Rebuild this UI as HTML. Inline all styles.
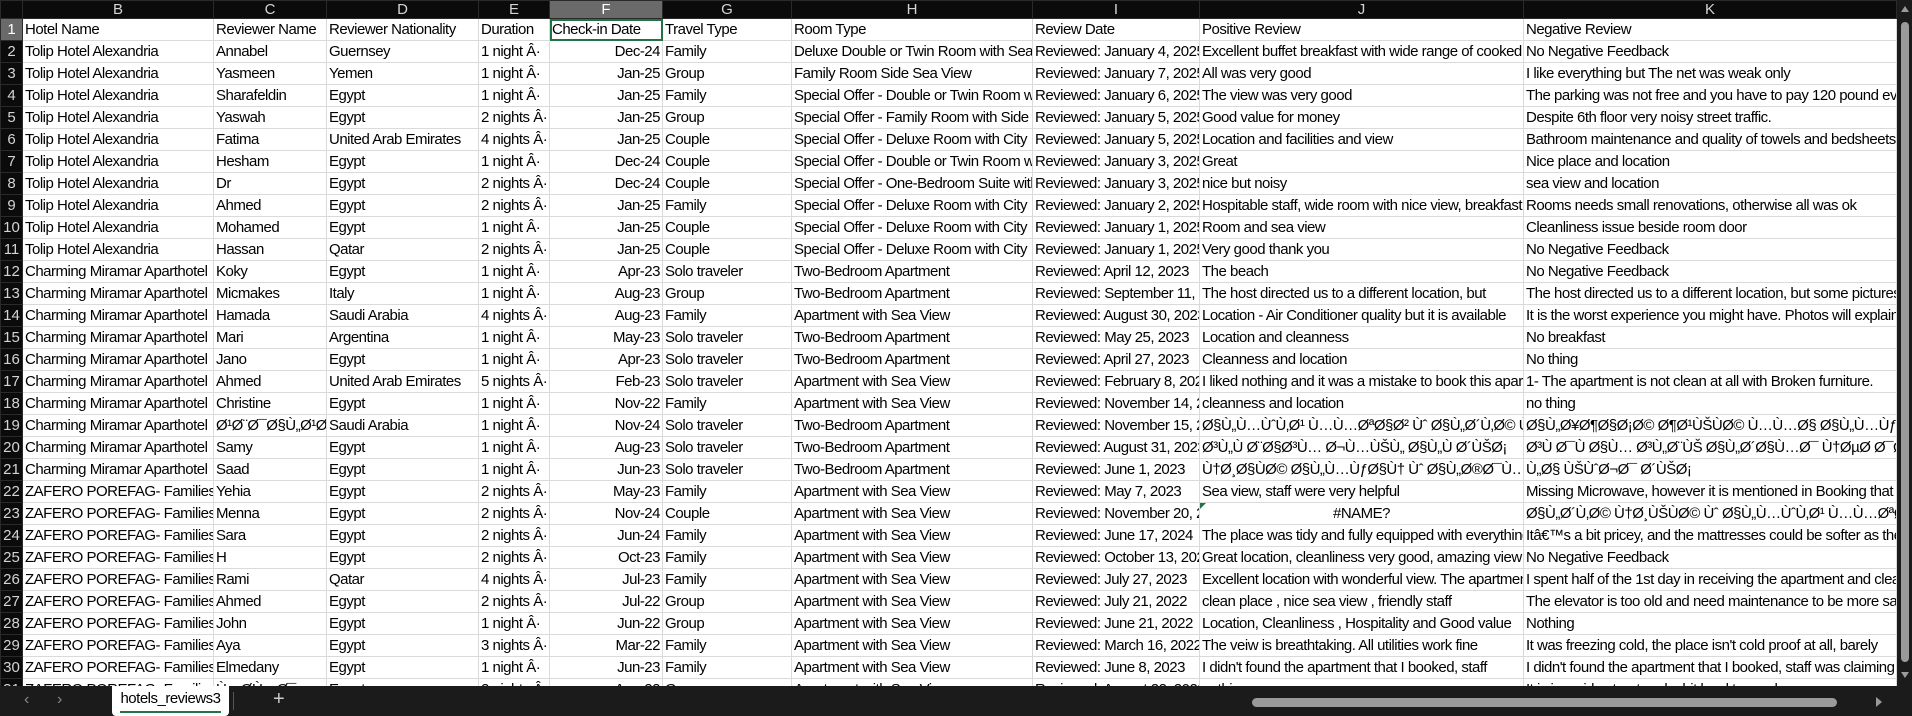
<!DOCTYPE html>
<html><head><meta charset="utf-8"><style>
body{margin:0;width:1912px;height:716px;overflow:hidden;background:#1b1b1b;font-family:"Liberation Sans Narrow","Liberation Sans",sans-serif;}
#wrap{position:absolute;left:0;top:0;width:1897px;height:686px;overflow:hidden;background:#fff}
table{border-collapse:collapse;table-layout:fixed;font-size:15px;color:#000;width:1896px;letter-spacing:-0.5px}
td{height:21px;padding:0 2px;border:1px solid #dadada;white-space:nowrap;overflow:hidden;line-height:21px;text-overflow:clip}
tr.h td{height:17px;line-height:17px;background:#0b0b0b;color:#d4d4d4;text-align:center;border-color:#2a2a2a;padding:0;letter-spacing:0}
td.r{background:#0b0b0b;color:#d4d4d4;text-align:center;border-color:#2a2a2a;padding:0;letter-spacing:0}
td.n{text-align:right}
.sel{background:#6a6a6a!important;color:#fff!important}
#vs{position:absolute;left:1897px;top:0;width:15px;height:686px;background:#1b1b1b}
#vs .t{position:absolute;left:4px;top:22px;width:8px;height:640px;background:#9a9a9a;border-radius:4px}
#bar{position:absolute;left:0;top:686px;width:1912px;height:30px;background:#1b1b1b;color:#bbb}
</style></head><body>
<div id="wrap"><table>
<colgroup><col style="width:22px"><col style="width:191px"><col style="width:113px"><col style="width:152px"><col style="width:71px"><col style="width:113px"><col style="width:129px"><col style="width:241px"><col style="width:167px"><col style="width:324px"><col style="width:373px"></colgroup>
<tr class="h"><td></td><td>B</td><td>C</td><td>D</td><td>E</td><td class="sel">F</td><td>G</td><td>H</td><td>I</td><td>J</td><td>K</td></tr>
<tr><td class="r sel">1</td><td>Hotel Name</td><td>Reviewer Name</td><td>Reviewer Nationality</td><td>Duration</td><td style="outline:2px solid #217346;outline-offset:-2px">Check-in Date</td><td>Travel Type</td><td>Room Type</td><td>Review Date</td><td>Positive Review</td><td>Negative Review</td></tr>
<tr><td class="r">2</td><td>Tolip Hotel Alexandria</td><td>Annabel</td><td>Guernsey</td><td>1 night Â·</td><td class="n">Dec-24</td><td>Family</td><td>Deluxe Double or Twin Room with Sea View</td><td>Reviewed: January 4, 2025</td><td>Excellent buffet breakfast with wide range of cooked</td><td>No Negative Feedback</td></tr>
<tr><td class="r">3</td><td>Tolip Hotel Alexandria</td><td>Yasmeen</td><td>Yemen</td><td>1 night Â·</td><td class="n">Jan-25</td><td>Group</td><td>Family Room Side Sea View</td><td>Reviewed: January 7, 2025</td><td>All was very good</td><td>I like everything but The net was weak only</td></tr>
<tr><td class="r">4</td><td>Tolip Hotel Alexandria</td><td>Sharafeldin</td><td>Egypt</td><td>1 night Â·</td><td class="n">Jan-25</td><td>Family</td><td>Special Offer - Double or Twin Room with</td><td>Reviewed: January 6, 2025</td><td>The view was very good</td><td>The parking was not free and you have to pay 120 pound every day</td></tr>
<tr><td class="r">5</td><td>Tolip Hotel Alexandria</td><td>Yaswah</td><td>Egypt</td><td>2 nights Â·</td><td class="n">Jan-25</td><td>Group</td><td>Special Offer - Family Room with Side</td><td>Reviewed: January 5, 2025</td><td>Good value for money</td><td>Despite 6th floor very noisy street traffic.</td></tr>
<tr><td class="r">6</td><td>Tolip Hotel Alexandria</td><td>Fatima</td><td>United Arab Emirates</td><td>4 nights Â·</td><td class="n">Jan-25</td><td>Couple</td><td>Special Offer - Deluxe Room with City</td><td>Reviewed: January 5, 2025</td><td>Location and facilities and view</td><td>Bathroom maintenance and quality of towels and bedsheets</td></tr>
<tr><td class="r">7</td><td>Tolip Hotel Alexandria</td><td>Hesham</td><td>Egypt</td><td>1 night Â·</td><td class="n">Dec-24</td><td>Couple</td><td>Special Offer - Double or Twin Room with</td><td>Reviewed: January 3, 2025</td><td>Great</td><td>Nice place and location</td></tr>
<tr><td class="r">8</td><td>Tolip Hotel Alexandria</td><td>Dr</td><td>Egypt</td><td>2 nights Â·</td><td class="n">Dec-24</td><td>Couple</td><td>Special Offer - One-Bedroom Suite with</td><td>Reviewed: January 3, 2025</td><td>nice but noisy</td><td>sea view and location</td></tr>
<tr><td class="r">9</td><td>Tolip Hotel Alexandria</td><td>Ahmed</td><td>Egypt</td><td>2 nights Â·</td><td class="n">Jan-25</td><td>Family</td><td>Special Offer - Deluxe Room with City</td><td>Reviewed: January 2, 2025</td><td>Hospitable staff, wide room with nice view, breakfast</td><td>Rooms needs small renovations, otherwise all was ok</td></tr>
<tr><td class="r">10</td><td>Tolip Hotel Alexandria</td><td>Mohamed</td><td>Egypt</td><td>1 night Â·</td><td class="n">Jan-25</td><td>Couple</td><td>Special Offer - Deluxe Room with City</td><td>Reviewed: January 1, 2025</td><td>Room and sea view</td><td>Cleanliness issue beside room door</td></tr>
<tr><td class="r">11</td><td>Tolip Hotel Alexandria</td><td>Hassan</td><td>Qatar</td><td>2 nights Â·</td><td class="n">Jan-25</td><td>Couple</td><td>Special Offer - Deluxe Room with City</td><td>Reviewed: January 1, 2025</td><td>Very good thank you</td><td>No Negative Feedback</td></tr>
<tr><td class="r">12</td><td>Charming Miramar Aparthotel</td><td>Koky</td><td>Egypt</td><td>1 night Â·</td><td class="n">Apr-23</td><td>Solo traveler</td><td>Two-Bedroom Apartment</td><td>Reviewed: April 12, 2023</td><td>The beach</td><td>No Negative Feedback</td></tr>
<tr><td class="r">13</td><td>Charming Miramar Aparthotel</td><td>Micmakes</td><td>Italy</td><td>1 night Â·</td><td class="n">Aug-23</td><td>Group</td><td>Two-Bedroom Apartment</td><td>Reviewed: September 11, 2023</td><td>The host directed us to a different location, but</td><td>The host directed us to a different location, but some pictures</td></tr>
<tr><td class="r">14</td><td>Charming Miramar Aparthotel</td><td>Hamada</td><td>Saudi Arabia</td><td>4 nights Â·</td><td class="n">Aug-23</td><td>Family</td><td>Apartment with Sea View</td><td>Reviewed: August 30, 2023</td><td>Location - Air Conditioner quality but it is available</td><td>It is the worst experience you might have. Photos will explain</td></tr>
<tr><td class="r">15</td><td>Charming Miramar Aparthotel</td><td>Mari</td><td>Argentina</td><td>1 night Â·</td><td class="n">May-23</td><td>Solo traveler</td><td>Two-Bedroom Apartment</td><td>Reviewed: May 25, 2023</td><td>Location and cleanness</td><td>No breakfast</td></tr>
<tr><td class="r">16</td><td>Charming Miramar Aparthotel</td><td>Jano</td><td>Egypt</td><td>1 night Â·</td><td class="n">Apr-23</td><td>Solo traveler</td><td>Two-Bedroom Apartment</td><td>Reviewed: April 27, 2023</td><td>Cleanness and location</td><td>No thing</td></tr>
<tr><td class="r">17</td><td>Charming Miramar Aparthotel</td><td>Ahmed</td><td>United Arab Emirates</td><td>5 nights Â·</td><td class="n">Feb-23</td><td>Solo traveler</td><td>Apartment with Sea View</td><td>Reviewed: February 8, 2023</td><td>I liked nothing and it was a mistake to book this apartment</td><td>1- The apartment is not clean at all with Broken furniture.</td></tr>
<tr><td class="r">18</td><td>Charming Miramar Aparthotel</td><td>Christine</td><td>Egypt</td><td>1 night Â·</td><td class="n">Nov-22</td><td>Family</td><td>Apartment with Sea View</td><td>Reviewed: November 14, 2022</td><td>cleanness and location</td><td>no thing</td></tr>
<tr><td class="r">19</td><td>Charming Miramar Aparthotel</td><td>Ø¹Ø¨Ø¯Ø§Ù„Ø¹Ø²ÙŠØ²</td><td>Saudi Arabia</td><td>1 night Â·</td><td class="n">Nov-24</td><td>Solo traveler</td><td>Two-Bedroom Apartment</td><td>Reviewed: November 15, 2024</td><td>Ø§Ù„Ù…ÙˆÙ‚Ø¹ Ù…Ù…ØªØ§Ø² Ùˆ Ø§Ù„Ø´Ù‚Ø© Ù†Ø¸ÙŠÙØ©</td><td>Ø§Ù„Ø¥Ø¶Ø§Ø¡Ø© Ø¶Ø¹ÙŠÙØ© Ù…Ù…Ø§ Ø§Ù„Ù…ÙƒÙŠÙ Ø§Ù„Ø´Ù‚Ø©</td></tr>
<tr><td class="r">20</td><td>Charming Miramar Aparthotel</td><td>Samy</td><td>Egypt</td><td>1 night Â·</td><td class="n">Aug-23</td><td>Solo traveler</td><td>Two-Bedroom Apartment</td><td>Reviewed: August 31, 2023</td><td>Ø³Ù„Ù Ø¨Ø§Ø³Ù… Ø¬Ù…ÙŠÙ„ Ø§Ù„Ù Ø´ÙŠØ¡</td><td>Ø³Ù Ø¯Ù Ø§Ù… Ø³Ù„Ø¨ÙŠ Ø§Ù„Ø´Ø§Ù…Ø¯ Ù†ØµØ­ Ø¯Ø§Ø¦Ù…Ø§</td></tr>
<tr><td class="r">21</td><td>Charming Miramar Aparthotel</td><td>Saad</td><td>Egypt</td><td>1 night Â·</td><td class="n">Jun-23</td><td>Solo traveler</td><td>Two-Bedroom Apartment</td><td>Reviewed: June 1, 2023</td><td>Ù†Ø¸Ø§ÙØ© Ø§Ù„Ù…ÙƒØ§Ù† Ùˆ Ø§Ù„Ø®Ø¯Ù…Ø©</td><td>Ù„Ø§ ÙŠÙˆØ¬Ø¯ Ø´ÙŠØ¡</td></tr>
<tr><td class="r">22</td><td>ZAFERO POREFAG- Families</td><td>Yehia</td><td>Egypt</td><td>2 nights Â·</td><td class="n">May-23</td><td>Family</td><td>Apartment with Sea View</td><td>Reviewed: May 7, 2023</td><td>Sea view, staff were very helpful</td><td>Missing Microwave, however it is mentioned in Booking that</td></tr>
<tr><td class="r">23</td><td>ZAFERO POREFAG- Families</td><td>Menna</td><td>Egypt</td><td>2 nights Â·</td><td class="n">Nov-24</td><td>Couple</td><td>Apartment with Sea View</td><td>Reviewed: November 20, 2024</td><td style="text-align:center;position:relative">#NAME?<span style="position:absolute;left:0;top:0;border-top:6px solid #217346;border-right:6px solid transparent"></span></td><td>Ø§Ù„Ø´Ù‚Ø© Ù†Ø¸ÙŠÙØ© Ùˆ Ø§Ù„Ù…ÙˆÙ‚Ø¹ Ù…Ù…ØªØ§Ø² Ø¬Ø¯Ø§</td></tr>
<tr><td class="r">24</td><td>ZAFERO POREFAG- Families</td><td>Sara</td><td>Egypt</td><td>2 nights Â·</td><td class="n">Jun-24</td><td>Family</td><td>Apartment with Sea View</td><td>Reviewed: June 17, 2024</td><td>The place was tidy and fully equipped with everything</td><td>Itâ€™s a bit pricey, and the mattresses could be softer as they</td></tr>
<tr><td class="r">25</td><td>ZAFERO POREFAG- Families</td><td>H</td><td>Egypt</td><td>2 nights Â·</td><td class="n">Oct-23</td><td>Family</td><td>Apartment with Sea View</td><td>Reviewed: October 13, 2023</td><td>Great location, cleanliness very good, amazing view</td><td>No Negative Feedback</td></tr>
<tr><td class="r">26</td><td>ZAFERO POREFAG- Families</td><td>Rami</td><td>Qatar</td><td>4 nights Â·</td><td class="n">Jul-23</td><td>Family</td><td>Apartment with Sea View</td><td>Reviewed: July 27, 2023</td><td>Excellent location with wonderful view. The apartment</td><td>I spent half of the 1st day in receiving the apartment and cleaning</td></tr>
<tr><td class="r">27</td><td>ZAFERO POREFAG- Families</td><td>Ahmed</td><td>Egypt</td><td>2 nights Â·</td><td class="n">Jul-22</td><td>Group</td><td>Apartment with Sea View</td><td>Reviewed: July 21, 2022</td><td>clean place , nice sea view , friendly staff</td><td>The elevator is too old and need maintenance to be more safe</td></tr>
<tr><td class="r">28</td><td>ZAFERO POREFAG- Families</td><td>John</td><td>Egypt</td><td>1 night Â·</td><td class="n">Jun-22</td><td>Group</td><td>Apartment with Sea View</td><td>Reviewed: June 21, 2022</td><td>Location, Cleanliness , Hospitality and Good value</td><td>Nothing</td></tr>
<tr><td class="r">29</td><td>ZAFERO POREFAG- Families</td><td>Aya</td><td>Egypt</td><td>3 nights Â·</td><td class="n">Mar-22</td><td>Family</td><td>Apartment with Sea View</td><td>Reviewed: March 16, 2022</td><td>The veiw is breathtaking. All utilities work fine</td><td>It was freezing cold, the place isn't cold proof at all, barely</td></tr>
<tr><td class="r">30</td><td>ZAFERO POREFAG- Families</td><td>Elmedany</td><td>Egypt</td><td>1 night Â·</td><td class="n">Jun-23</td><td>Family</td><td>Apartment with Sea View</td><td>Reviewed: June 8, 2023</td><td>I didn't found the apartment that I booked, staff</td><td>I didn't found the apartment that I booked, staff was claiming</td></tr>
<tr><td class="r">31</td><td>ZAFERO POREFAG- Families</td><td>Ù…Ø­Ù…Ø¯</td><td>Egypt</td><td>2 nights Â·</td><td class="n">Aug-22</td><td>Group</td><td>Apartment with Sea View</td><td>Reviewed: August 22, 2022</td><td>nothing</td><td>It is in a side street and a bit hard to reach</td></tr>
</table></div>
<div id="vs"><div class="t"></div><div style="position:absolute;left:4px;top:6px;border-bottom:6px solid #9a9a9a;border-left:4px solid transparent;border-right:4px solid transparent"></div><div style="position:absolute;left:4px;top:672px;border-top:6px solid #9a9a9a;border-left:4px solid transparent;border-right:4px solid transparent"></div></div>
<div id="bar">
<span style="position:absolute;left:24px;top:5px;font-size:16px;color:#888">‹</span>
<span style="position:absolute;left:57px;top:5px;font-size:16px;color:#888">›</span>
<div style="position:absolute;left:112px;top:0;width:117px;height:30px;background:#fff;border-radius:0 0 4px 4px;font-size:15px;letter-spacing:-0.5px;color:#000;text-align:center;line-height:26px">hotels_reviews3<div style="position:absolute;left:8px;right:8px;bottom:3px;height:2px;background:#217346"></div></div>
<div style="position:absolute;left:233px;top:6px;width:1px;height:18px;background:#555"></div>
<span style="position:absolute;left:273px;top:2px;font-size:20px;color:#ccc">+</span>
<div style="position:absolute;left:1252px;top:12px;width:585px;height:9px;background:#9a9a9a;border-radius:5px"></div>
<div style="position:absolute;left:1876px;top:11px;border-left:6px solid #9a9a9a;border-top:5px solid transparent;border-bottom:5px solid transparent"></div>
</div>
</body></html>
